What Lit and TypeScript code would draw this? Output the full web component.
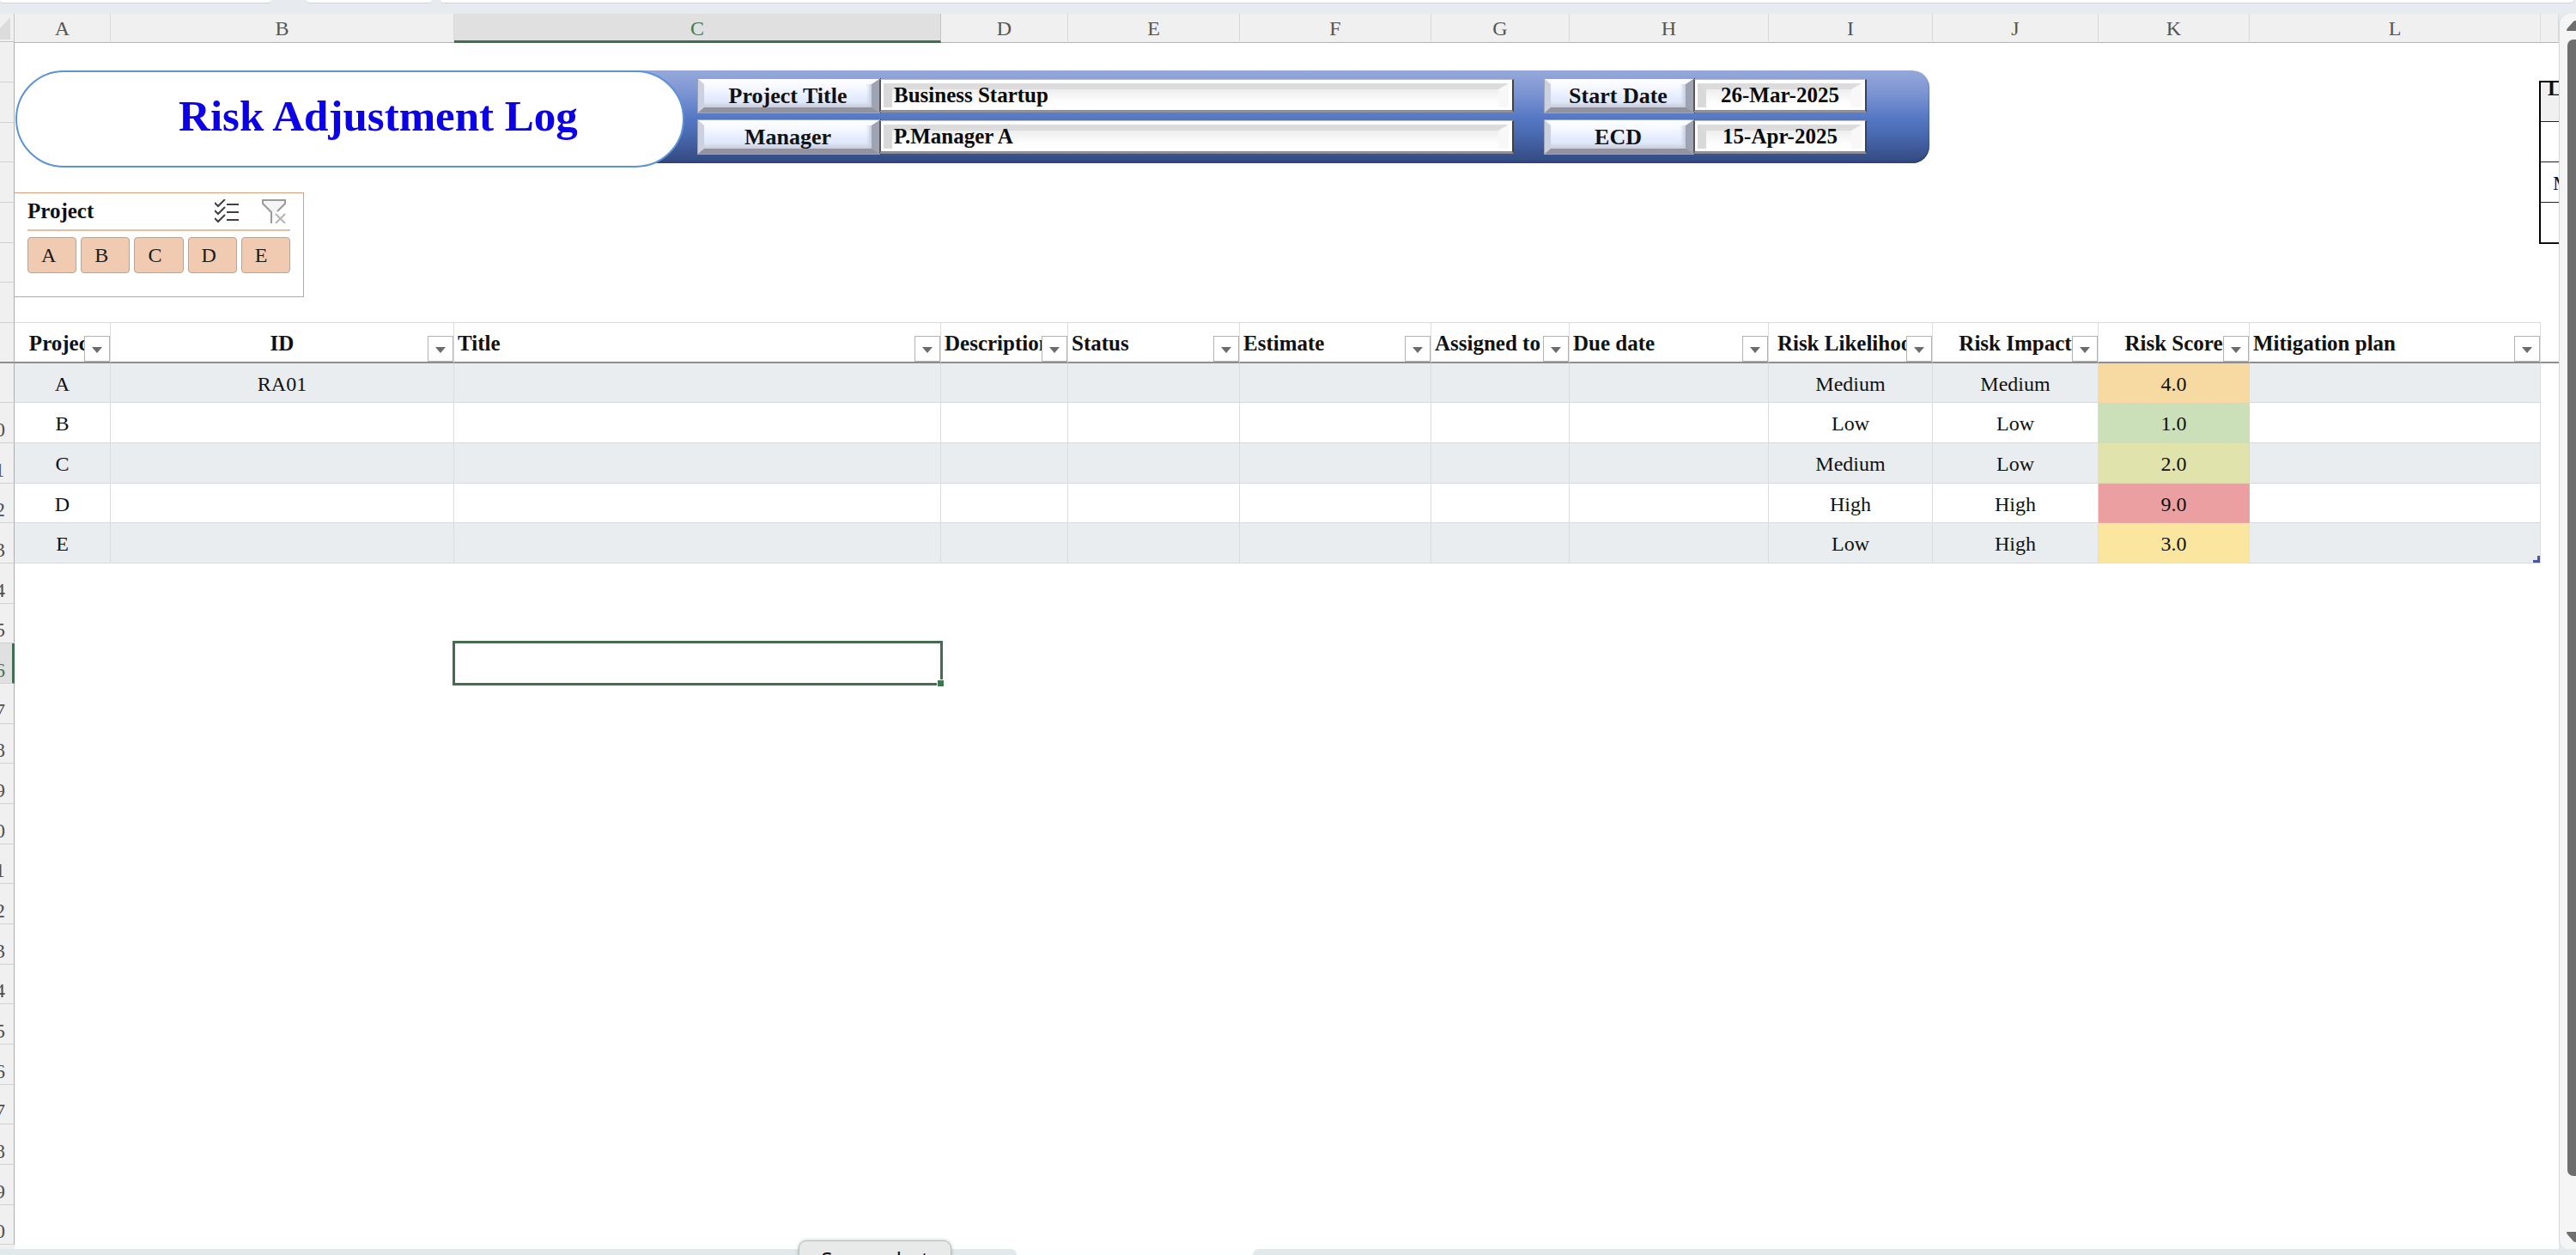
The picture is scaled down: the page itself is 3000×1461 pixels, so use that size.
import { LitElement, html, css, svg } from "lit";
import { customElement } from "lit/decorators.js";
import { classMap } from "lit/directives/class-map.js";
import { styleMap } from "lit/directives/style-map.js";

interface Column {
  letter: string;
  title: string;
  width: number | null;
  centred: boolean;
}

const COLUMNS: Column[] = [
  { letter: "A", title: "Project", width: 112, centred: true },
  { letter: "B", title: "ID", width: 400, centred: true },
  { letter: "C", title: "Title", width: 567, centred: false },
  { letter: "D", title: "Description", width: 148, centred: false },
  { letter: "E", title: "Status", width: 200, centred: false },
  { letter: "F", title: "Estimate", width: 223, centred: false },
  { letter: "G", title: "Assigned to", width: 161, centred: false },
  { letter: "H", title: "Due date", width: 232, centred: false },
  { letter: "I", title: "Risk Likelihood", width: 191, centred: true },
  { letter: "J", title: "Risk Impact", width: 193, centred: true },
  { letter: "K", title: "Risk Score", width: 176, centred: true },
  { letter: "L", title: "Mitigation plan", width: null, centred: false },
];

const RISKS = [
  { project: "A", id: "RA01", likelihood: "Medium", impact: "Medium", score: "4.0", tone: "orange" },
  { project: "B", id: "", likelihood: "Low", impact: "Low", score: "1.0", tone: "green" },
  { project: "C", id: "", likelihood: "Medium", impact: "Low", score: "2.0", tone: "olive" },
  { project: "D", id: "", likelihood: "High", impact: "High", score: "9.0", tone: "red" },
  { project: "E", id: "", likelihood: "Low", impact: "High", score: "3.0", tone: "yellow" },
];

const ROW_COUNT = 30;
const ACTIVE_ROW = 16;
const ACTIVE_COLUMN = "C";

@customElement("sheet-banner")
class SheetBanner extends LitElement {
  static styles = css`
    :host {
      display: flex;
      align-items: flex-start;
      padding-left: 1px;
    }
    .title {
      box-sizing: border-box;
      position: relative;
      width: 779px;
      height: 113px;
      margin: 0;
      padding: 0 0 8px 66px;
      display: flex;
      align-items: center;
      justify-content: center;
      border: 2px solid #5b93d6;
      border-radius: 57px;
      background: #fff;
      color: #0b00e6;
      font-size: 51px;
      font-weight: 700;
      white-space: nowrap;
    }
    .panel {
      box-sizing: border-box;
      display: grid;
      grid-template-columns: 211px 739px 36px 173px 202px;
      grid-template-rows: 39px 39px;
      row-gap: 9px;
      height: 108px;
      margin-left: -60px;
      padding: 10px 73px 0 76px;
      border-radius: 0 20px 20px 0;
      background: linear-gradient(#95a8da 0%, #7b94d2 25%, #5577c3 52%, #4c6db6 65%, #33497f 100%);
      box-shadow: inset 0 -2px 2px #2f4478;
    }
    .label {
      box-sizing: border-box;
      display: flex;
      align-items: center;
      justify-content: center;
      border-style: solid;
      border-width: 6px 9px 6px 7px;
      border-color: #fbfcff #9fa4b4 #92939f #ccd1e0;
      background: linear-gradient(#fbfcff, #e3ecff 60%, #dde3f0);
      box-shadow: inset -3px -3px 4px #c8cddb, 0 0 0 1px #9ea3b5, 1px 0 0 1px #3c3e47;
      line-height: 26px;
      font-size: 26px;
      font-weight: 700;
      white-space: nowrap;
    }
    .value {
      box-sizing: border-box;
      display: grid;
      min-width: 0;
      border-style: solid;
      border-width: 1px 2px 3px 2px;
      border-color: #b9bcc8 #3f4048 #8f9099 #55565e;
      background: #fff;
    }
    .value::before {
      content: "";
      grid-area: 1 / 1;
      margin: 4px 4px 3px 3px;
      border-style: solid;
      border-width: 7px 12px 0 10px;
      border-color: #dcdcdc #f8f8f8 #fff #d9d9d9;
      background: linear-gradient(#eeeeee, #fdfdfd 70%);
    }
    .input {
      grid-area: 1 / 1;
      box-sizing: border-box;
      width: 100%;
      min-width: 0;
      margin: 0;
      padding: 0 15px;
      border: 0;
      outline: 0;
      background: transparent;
      color: #0a0a0a;
      font: inherit;
      font-size: 25px;
      font-weight: 700;
    }
    .input.centred {
      padding: 0;
      text-align: center;
    }
    .start {
      grid-column: 4;
    }
  `;

  render() {
    return html`
      <h1 class="title">Risk Adjustment Log</h1>
      <div class="panel">
        <label class="label" for="project-title">Project Title</label>
        <div class="value"><input class="input" id="project-title" type="text" value="Business Startup" /></div>
        <label class="label start" for="start-date">Start Date</label>
        <div class="value"><input class="input centred" id="start-date" type="text" value="26-Mar-2025" /></div>
        <label class="label" for="manager">Manager</label>
        <div class="value"><input class="input" id="manager" type="text" value="P.Manager A" /></div>
        <label class="label start" for="ecd">ECD</label>
        <div class="value"><input class="input centred" id="ecd" type="text" value="15-Apr-2025" /></div>
      </div>
    `;
  }
}

@customElement("project-slicer")
class ProjectSlicer extends LitElement {
  static styles = css`
    :host {
      box-sizing: border-box;
      display: block;
      width: 337px;
      height: 122px;
      padding: 0 15px;
      border: 1px solid #dd9c7c;
      border-left: 0;
      background: #fff;
    }
    .head {
      display: flex;
      align-items: center;
      height: 42px;
      padding-right: 5px;
      border-bottom: 2px solid #e3bfa8;
    }
    .name {
      flex: 1;
      margin: 0;
      font-size: 25px;
      font-weight: 700;
    }
    .tool {
      display: block;
      width: 28px;
      height: 28px;
      margin-left: 27px;
      padding: 0;
      border: 0;
      background: none;
    }
    .icon {
      display: block;
      fill: none;
    }
    .items {
      display: grid;
      grid-template-columns: repeat(5, 1fr);
      gap: 5px;
      margin-top: 7px;
    }
    .item {
      height: 42px;
      padding: 0 0 0 15px;
      border: 1px solid #b7a597;
      border-radius: 4px;
      background: #f0cbb1;
      color: #1a1a1a;
      font: inherit;
      font-size: 24px;
      text-align: left;
    }
  `;

  render() {
    return html`
      <div class="head">
        <h2 class="name">Project</h2>
        <button class="tool" aria-label="Multi-select">
          <svg class="icon" width="28" height="28" viewBox="0 0 28 28" stroke="#404040" stroke-width="2">
            ${[6, 15, 24].map((y) => svg`<path d=${`M0 ${y - 2}l4 4 8-8M14 ${y}h14`} />`)}
          </svg>
        </button>
        <button class="tool" aria-label="Clear filter">
          <svg class="icon" width="28" height="28" viewBox="0 0 28 28" stroke-width="2">
            <path d="M11 28V15L1 5V1h26v4l-9 9" stroke="#9a9a9a" fill="#f5f5f5" />
            <path d="M16 17l11 11M27 17L16 28" stroke="#b3b3b3" />
          </svg>
        </button>
      </div>
      <div class="items">
        ${RISKS.map((risk) => html`<button class="item">${risk.project}</button>`)}
      </div>
    `;
  }
}

@customElement("risk-table")
class RiskTable extends LitElement {
  static styles = css`
    :host {
      display: block;
    }
    .table {
      width: 100%;
      table-layout: fixed;
      border-collapse: separate;
      border-spacing: 0;
    }
    .edge {
      width: 21px;
    }
    .head {
      box-sizing: border-box;
      position: relative;
      height: 48px;
      padding: 3px 0 0 4px;
      border-top: 1px solid #d8dadb;
      border-right: 1px solid #dcdedf;
      border-bottom: 2px solid #8d8f8f;
      overflow: hidden;
      font-size: 25px;
      font-weight: 700;
      text-align: left;
      white-space: nowrap;
    }
    .head.centred {
      padding: 3px 0 0;
      text-align: center;
    }
    .head.blank {
      border-top-color: transparent;
      border-right: 0;
    }
    .filter {
      position: absolute;
      right: 0;
      bottom: 0;
      width: 30px;
      height: 30px;
      padding: 0;
      border: 1px solid #b4b4b4;
      background: #fff;
      box-shadow: 0 -10px 0 #fff;
    }
    .arrow {
      display: block;
      margin: 2px auto 0;
    }
    .cell {
      box-sizing: border-box;
      height: 47px;
      padding: 3px 0 0;
      border-right: 1px solid #dadcde;
      border-bottom: 1px solid #d8dbdd;
      font-size: 24px;
      text-align: center;
      position: relative;
    }
    .row:nth-child(3n + 1) .cell {
      height: 46px;
    }
    .row:nth-child(odd) .cell {
      background: #e9edf0;
    }
    .row .cell.blank {
      border: 0;
      background: none;
    }
    .row .cell.orange {
      background: #f7daa1;
      border-color: #f3d7a2;
    }
    .row .cell.green {
      background: #cbdfb9;
      border-color: #ccddb8;
    }
    .row .cell.olive {
      background: #e1e3ad;
      border-color: #e3d5b0;
    }
    .row .cell.red {
      background: #ec9fa0;
      border-color: #eda8a3;
    }
    .row .cell.yellow {
      background: #fbe6a0;
      border-color: #efe2b4;
    }
    .corner {
      position: absolute;
      right: 0;
      bottom: 0;
      display: block;
    }
  `;

  private header(column: Column) {
    return html`
      <th class=${classMap({ head: true, centred: column.centred })} scope="col">
        ${column.title}
        <button class="filter" aria-label=${`Filter ${column.title}`}>
          <svg class="arrow" width="12" height="7" viewBox="0 0 12 7" fill="#6b6b6b"><path d="M0 0h12L6 7z" /></svg>
        </button>
      </th>
    `;
  }

  render() {
    return html`
      <table class="table">
        <colgroup>
          ${COLUMNS.map(
            (c) => html`<col style=${styleMap(c.width === null ? {} : { width: `${c.width}px` })} />`
          )}
          <col class="edge" />
        </colgroup>
        <thead>
          <tr>
            ${COLUMNS.map((c) => this.header(c))}
            <td class="head blank"></td>
          </tr>
        </thead>
        <tbody>
          ${RISKS.map(
            (risk, index) => html`
              <tr class="row">
                <td class="cell">${risk.project}</td>
                <td class="cell">${risk.id}</td>
                ${["C", "D", "E", "F", "G", "H"].map(() => html`<td class="cell"></td>`)}
                <td class="cell">${risk.likelihood}</td>
                <td class="cell">${risk.impact}</td>
                <td class=${`cell ${risk.tone}`}>${risk.score}</td>
                <td class="cell">
                  ${index === RISKS.length - 1
                    ? html`<svg class="corner" width="8" height="8" viewBox="0 0 8 8" fill="#4656a0">
                        <path d="M5 0h3v8H0V5h5z" />
                      </svg>`
                    : ""}
                </td>
                <td class="cell blank"></td>
              </tr>
            `
          )}
        </tbody>
      </table>
    `;
  }
}

@customElement("app-root")
class AppRoot extends LitElement {
  static styles = css`
    :host {
      display: flex;
      flex-direction: column;
      height: 100vh;
      overflow: hidden;
      background: #e7ebef;
      color: #111;
      font-family: "Liberation Serif", "Times New Roman", serif;
      font-size: 24px;
    }
    .ribbon {
      display: grid;
      grid-template-columns: 316px 146px 1fr;
      column-gap: 41px;
      height: 16px;
      flex: none;
    }
    .slot {
      box-sizing: border-box;
      height: 4px;
      border-bottom: 1px solid #cfd4d8;
      border-radius: 0 0 5px 5px;
      background: #fff;
    }
    .slot.wide {
      margin: 0 3px 0 -31px;
    }
    .work {
      display: flex;
      flex: 1;
      min-height: 0;
    }
    .rows {
      flex: none;
      width: 45px;
      margin-left: -28px;
      background: #f0f0f0;
    }
    .select-all {
      box-sizing: border-box;
      display: flex;
      justify-content: flex-end;
      width: 100%;
      height: 33px;
      padding: 4px 4px 0 0;
      border: 0;
      border-right: 1px solid #c4c4c4;
      border-bottom: 1px solid #c4c4c4;
      background: #f0f0f0;
    }
    .row-number {
      box-sizing: border-box;
      display: flex;
      align-items: flex-end;
      justify-content: center;
      height: 47px;
      padding-bottom: 2px;
      border-right: 1px solid #adadad;
      border-bottom: 1px solid #d2d2d2;
      color: #505050;
      line-height: 26px;
    }
    .row-number.short {
      height: 46px;
    }
    .row-number.frozen {
      border-bottom: 2px solid #8d8f8f;
    }
    .row-number.active {
      padding-left: 2px;
      border-right: 3px solid #3f7050;
      background: #e0e0e0;
      color: #3f7a55;
    }
    .sheet {
      flex: 1;
      min-width: 0;
      overflow: hidden;
      background: #fff;
    }
    .letters {
      display: grid;
      height: 33px;
    }
    .letter {
      box-sizing: border-box;
      display: flex;
      align-items: center;
      justify-content: center;
      padding-top: 2px;
      border-right: 1px solid #d9d9d9;
      border-bottom: 1px solid #b5b5b5;
      background: #f0f0f0;
      color: #555;
    }
    .letter.active {
      padding-top: 4px;
      border-right-color: #c4c4c4;
      border-bottom: 3px solid #3f7050;
      background: #e0e0e0;
      color: #3f7a55;
    }
    .top {
      display: flex;
      justify-content: space-between;
      height: 326px;
    }
    .floating {
      padding-top: 33px;
    }
    .slicer {
      margin-top: 29px;
    }
    .legend {
      flex: none;
      width: 23px;
      margin-top: 45px;
      overflow: hidden;
    }
    .legend-table {
      width: 100%;
      table-layout: fixed;
      border-collapse: separate;
      border-spacing: 0;
      border-left: 2px solid #000;
      border-top: 2px solid #000;
      border-bottom: 1px solid #000;
    }
    .legend-cell {
      box-sizing: border-box;
      height: 47px;
      padding: 2px 0 0 14px;
      border-bottom: 1px solid #222;
      overflow: hidden;
      line-height: 26px;
    }
    .legend-cell.first {
      height: 46px;
      padding: 0 0 0 8px;
      background: #f0f0f0;
      font-size: 25px;
      font-weight: 700;
      line-height: 13px;
      text-align: left;
      vertical-align: top;
    }
    .selection {
      box-sizing: border-box;
      position: relative;
      width: 571px;
      height: 52px;
      margin: 90px 0 0 510px;
      border: 3px solid #456b50;
    }
    .handle {
      position: absolute;
      right: -5px;
      bottom: -5px;
      width: 7px;
      height: 7px;
      border: 1px solid #fff;
      background: #41754f;
    }
    .scroll {
      box-sizing: border-box;
      display: flex;
      flex-direction: column;
      flex: none;
      width: 20px;
      margin-bottom: -1px;
      padding-left: 9px;
      border-left: 1px solid #d5d9dc;
      border-radius: 12px 0 0 12px;
      background: #f5f5f5;
      overflow: hidden;
    }
    .step {
      flex: none;
      width: 18px;
      height: 12px;
      margin: 8px 0 10px -1px;
      padding: 0;
      border: 0;
      background: none;
    }
    .thumb {
      flex: 1;
      width: 18px;
      border-radius: 7px;
      background: #6e6e6e;
    }
    .step.down {
      margin: 65px 0 9px -1px;
    }
    .step-icon {
      display: block;
    }
    .dock {
      position: relative;
      display: grid;
      grid-template-columns: 1184fr 275fr 1541fr;
      flex: none;
      height: 7px;
      background: #fdfeff;
    }
    .dock-part {
      background: #e2e9ea;
    }
    .dock-part.left {
      border-radius: 0 8px 0 0;
    }
    .dock-part.right {
      grid-column: 3;
      border-radius: 8px 0 0 0;
    }
    .tip {
      box-sizing: border-box;
      position: absolute;
      left: 31%;
      top: -10px;
      width: 178px;
      height: 44px;
      border: 1px solid #b9bcbc;
      border-radius: 9px;
      background: #e8eaea;
      box-shadow: 0 0 4px rgba(0, 0, 0, 0.25);
      color: #111;
      font-family: "Noto Sans", sans-serif;
      font-size: 24px;
      line-height: 42px;
      text-align: center;
    }
  `;

  private rowNumber(n: number) {
    const classes = {
      "row-number": true,
      short: n % 3 === 0,
      frozen: n === 8,
      active: n === ACTIVE_ROW,
    };
    return html`<div class=${classMap(classes)}>${n}</div>`;
  }

  render() {
    const tracks = COLUMNS.map((c) => (c.width === null ? "1fr" : `${c.width}px`)).join(" ") + " 21px";
    return html`
      <div class="ribbon">
        <div class="slot"></div>
        <div class="slot"></div>
        <div class="slot wide"></div>
      </div>
      <main class="work">
        <div class="rows">
          <button class="select-all" aria-label="Select all">
            <svg width="24" height="26" viewBox="0 0 24 26" fill="#dcdcdc"><path d="M24 0v26H0z" /></svg>
          </button>
          ${Array.from({ length: ROW_COUNT }, (_, i) => this.rowNumber(i + 1))}
        </div>
        <div class="sheet">
          <div class="letters" style=${styleMap({ gridTemplateColumns: tracks })}>
            ${COLUMNS.map(
              (c) => html`<div class=${classMap({ letter: true, active: c.letter === ACTIVE_COLUMN })}>${c.letter}</div>`
            )}
            <div class="letter"></div>
          </div>
          <div class="top">
            <div class="floating">
              <sheet-banner></sheet-banner>
              <project-slicer class="slicer"></project-slicer>
            </div>
            <div class="legend">
              <table class="legend-table">
                <tr><th class="legend-cell first">L</th></tr>
                <tr><td class="legend-cell"></td></tr>
                <tr><td class="legend-cell">M</td></tr>
                <tr><td class="legend-cell"></td></tr>
              </table>
            </div>
          </div>
          <risk-table></risk-table>
          <div class="selection"><span class="handle"></span></div>
        </div>
        <div class="scroll">
          <button class="step" aria-label="Scroll up">
            <svg class="step-icon" width="20" height="12" viewBox="0 0 20 12" fill="#6e6e6e"><path d="M1 12q-2 0 0-3L8 1q2-2 4 0l8 11z" /></svg>
          </button>
          <div class="thumb"></div>
          <button class="step down" aria-label="Scroll down">
            <svg class="step-icon" width="20" height="12" viewBox="0 0 20 12" fill="#6e6e6e"><path d="M1 0q-2 0 0 3l7 8q2 2 4 0l8-11z" /></svg>
          </button>
        </div>
      </main>
      <footer class="dock">
        <div class="dock-part left"></div>
        <div class="dock-part right"></div>
        <div class="tip" role="tooltip">Screenshot</div>
      </footer>
    `;
  }
}
